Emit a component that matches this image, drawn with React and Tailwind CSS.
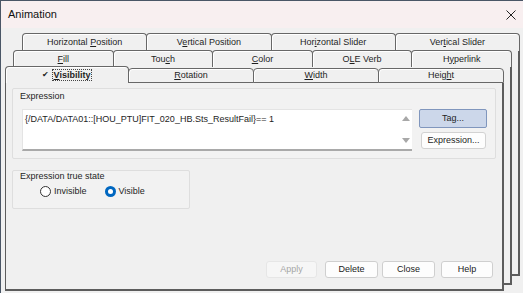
import clsx from "clsx";

// stacked tab rows, back to front
const row1 = [
  ["Horizontal Position", 11],
  ["Vertical Position", 1],
  ["Horizontal Slider", 3],
  ["Vertical Slider", 3],
];
const row2 = [
  ["Fill", 0],
  ["Touch", 3],
  ["Color", 0],
  ["OLE Verb", 1],
  ["Hyperlink", 1],
];
const row3 = [
  ["Rotation", 0],
  ["Width", 0],
  ["Height", 4],
];

// label with the accelerator letter underlined
function Accel({ text, u }) {
  return (
    <>
      {text.slice(0, u)}
      <span className="underline underline-offset-[1px]">{text[u]}</span>
      {text.slice(u + 1)}
    </>
  );
}

function Tab({ text, u, className }) {
  return (
    <div
      className={clsx(
        "flex-1 -ml-px first:ml-0 flex items-center justify-center border-[#676767] rounded-t-[4px] bg-[#f0f0f0] shadow-[inset_1px_1px_0_#ffffff] leading-none",
        className
      )}
    >
      <span>
        <Accel text={text} u={u} />
      </span>
    </div>
  );
}

function BackLayer({ tabs, className, rowH }) {
  return (
    <div className={clsx("col-start-1 row-start-1 self-start justify-self-start flex flex-col", className)}>
      <div className={clsx("flex", rowH)}>
        {tabs.map(([t, u]) => (
          <Tab key={t} text={t} u={u} className="border border-b-0" />
        ))}
      </div>
      <div className="flex-1 border-l border-r-2 border-b-2 border-[#5c5c5c] bg-[#f0f0f0]" />
    </div>
  );
}

function Radio({ checked, label }) {
  return (
    <div className="flex items-center gap-[3px]">
      {checked ? (
        <span className="w-[11px] h-[11px] rounded-full bg-[#0067c0] flex items-center justify-center">
          <span className="w-[5px] h-[5px] rounded-full bg-white" />
        </span>
      ) : (
        <span className="w-[11px] h-[11px] rounded-full border border-[#333] bg-white" />
      )}
      <span>{label}</span>
    </div>
  );
}

function Btn({ children, className, disabled }) {
  return (
    <div
      className={clsx(
        "h-[17px] flex items-center justify-center rounded-[3px] border",
        disabled
          ? "bg-[#f6f6f6] border-[#e6e6e6] text-[#a6a6a6]"
          : "bg-[#fdfdfd] border-[#cfcfcf] text-[#1b1b1b]",
        className
      )}
    >
      {children}
    </div>
  );
}

export default function App() {
  return (
    <div className="w-[523px] h-[293px] overflow-hidden flex flex-col bg-[#f0f0f0] text-[9px] text-[#1e1e1e] font-['Liberation_Sans',Arial,sans-serif] border-t border-l border-[#4a5666]">
      {/* title bar */}
      <div className="h-[27px] shrink-0 flex items-center justify-between pl-[7px] pr-[6px] bg-[#f8eff0]">
        <span className="text-[11px] text-[#111]">Animation</span>
        <svg width="10" height="10" viewBox="0 0 10 10" className="mr-[1px]">
          <path d="M0.5 0.5L9.5 9.5M9.5 0.5L0.5 9.5" stroke="#222" strokeWidth="1" />
        </svg>
      </div>

      <div className="grid flex-1">
        <BackLayer tabs={row1} rowH="h-[18px]" className="ml-[21px] mt-[5px] w-[498px] h-[243px]" />
        <BackLayer tabs={row2} rowH="h-[17px]" className="ml-[12px] mt-[22px] w-[499px] h-[235px]" />

        {/* front page */}
        <div className="col-start-1 row-start-1 self-start justify-self-start ml-[4px] mt-[38px] w-[499px] h-[225px] flex flex-col">
          <div className="flex items-end h-[17px]">
            <div className="w-[124px] h-[17px] flex items-center justify-center border border-b-0 border-[#676767] rounded-t-[4px] bg-[#f0f0f0] shadow-[inset_1px_1px_0_#ffffff] relative z-10">
              <span className="text-[8px] mr-[3px]">✔</span>
              <span className="font-bold border border-dotted border-[#444] px-px leading-[10px]">
                <Accel text="Visibility" u={0} />
              </span>
            </div>
            {row3.map(([t, u]) => (
              <Tab key={t} text={t} u={u} className="h-[15px] border" />
            ))}
          </div>
          <div className="flex-1 flex flex-col border-l border-r-2 border-b-2 border-[#5c5c5c] bg-[#f0f0f0] px-[6px]">
            {/* expression group */}
            <div className="mt-[5px] w-[484px] h-[71px] border border-[#dedede] rounded-[2px] bg-[#f2f2f2] flex flex-col">
              <div className="mt-[2px] ml-[7px] leading-[10px]">Expression</div>
              <div className="flex mt-[8px] ml-[9px]">
                <div className="w-[390px] h-[42px] bg-white border-t border-l border-[#e4e4e4] border-b-2 border-b-[#a9a9a9] flex">
                  <div className="flex-1 pl-[2px] pt-[4px] leading-[10px] whitespace-nowrap">
                    {"{/DATA/DATA01::[HOU_PTU]FIT_020_HB.Sts_ResultFail}== 1"}
                  </div>
                  <div className="w-[12px] flex flex-col items-center justify-between py-[6px]">
                    <svg width="8" height="5" viewBox="0 0 8 5">
                      <path d="M4 0L8 5H0Z" fill="#a8a8a8" />
                    </svg>
                    <svg width="8" height="5" viewBox="0 0 8 5">
                      <path d="M0 0H8L4 5Z" fill="#a8a8a8" />
                    </svg>
                  </div>
                </div>
                <div className="ml-[7px] flex flex-col">
                  <div className="w-[68px] h-[19px] flex items-center justify-center bg-[#ccd7ea] border border-[#8096bd] rounded-[2px]">
                    Tag...
                  </div>
                  <div className="mt-[4px] ml-[2px] w-[65px] h-[17px] flex items-center justify-center bg-[#fdfdfd] border border-[#d2d2d2] rounded-[3px]">
                    Expression...
                  </div>
                </div>
              </div>
            </div>

            {/* expression true state group */}
            <div className="mt-[11px] w-[178px] h-[39px] border border-[#dedede] rounded-[2px] bg-[#f2f2f2] flex flex-col">
              <div className="ml-[7px] leading-[10px]">Expression true state</div>
              <div className="mt-[4px] ml-[27px] flex items-center gap-[18px] leading-[12px]">
                <Radio label="Invisible" />
                <Radio checked label="Visible" />
              </div>
            </div>

            <div className="flex-1" />

            {/* buttons */}
            <div className="flex justify-end items-center mb-[11px] mr-[3px]">
              <Btn disabled className="w-[51px]">Apply</Btn>
              <Btn className="w-[53px] ml-[8px]">Delete</Btn>
              <Btn className="w-[53px] ml-[4px]">Close</Btn>
              <Btn className="w-[52px] ml-[6px]">Help</Btn>
            </div>
          </div>
        </div>
      </div>
    </div>
  );
}
